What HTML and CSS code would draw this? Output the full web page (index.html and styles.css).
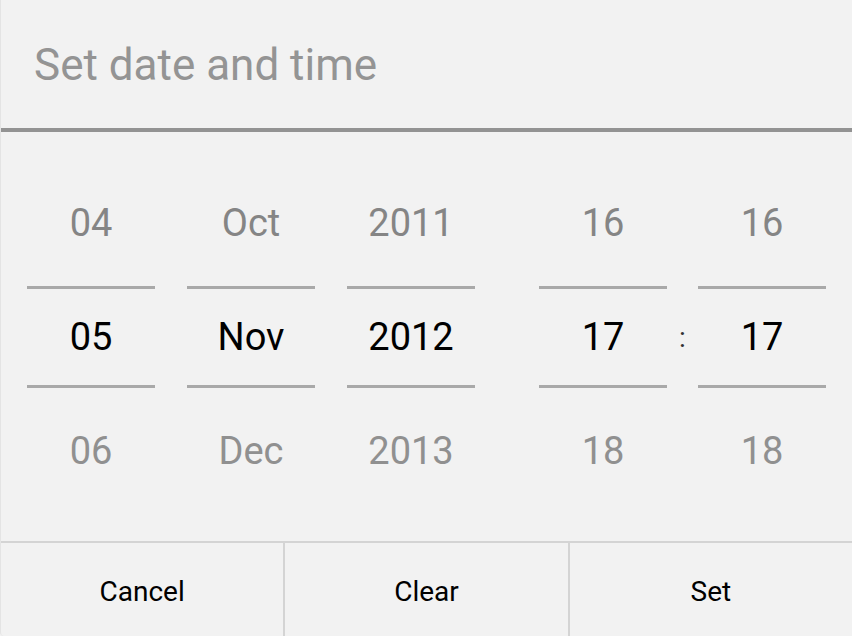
FILE: index.html
```html
<!DOCTYPE html>
<html lang="en">

<head>
    <meta charset="UTF-8">
    <meta name="viewport" content="width=device-width, initial-scale=1.0">
    <title>Set date and time</title>
    <link rel="stylesheet" href="styles.css">
</head>

<body>
    <div class="dialog">
        <div class="title">Set date and time</div>

        <div class="pickers">
            <div class="group">
                <div class="picker">
                    <div class="item prev">04</div>
                    <div class="item current">05</div>
                    <div class="item next">06</div>
                </div>
                <div class="picker">
                    <div class="item prev">Oct</div>
                    <div class="item current">Nov</div>
                    <div class="item next">Dec</div>
                </div>
                <div class="picker">
                    <div class="item prev">2011</div>
                    <div class="item current">2012</div>
                    <div class="item next">2013</div>
                </div>
            </div>

            <div class="group time">
                <div class="picker">
                    <div class="item prev">16</div>
                    <div class="item current">17</div>
                    <div class="item next">18</div>
                </div>
                <div class="colon">:</div>
                <div class="picker">
                    <div class="item prev">16</div>
                    <div class="item current">17</div>
                    <div class="item next">18</div>
                </div>
            </div>
        </div>

        <div class="buttons">
            <button>Cancel</button>
            <button>Clear</button>
            <button>Set</button>
        </div>
    </div>
</body>

</html>
```

FILE: styles.css
```css
html,
body {
    margin: 0;
    padding: 0;
    background-color: #f2f2f2;
    font-family: Roboto, "Liberation Sans", Arial, sans-serif;
}

.dialog {
    width: 852px;
    height: 636px;
    display: flex;
    flex-direction: column;
    box-sizing: border-box;
    border-left: 1px solid #e4e4e4;
    border-bottom-left-radius: 4px;
}

.title {
    height: 128px;
    flex-shrink: 0;
    padding-left: 33px;
    padding-top: 2px;
    box-sizing: border-box;
    display: flex;
    align-items: center;
    font-size: 44px;
    color: #949494;
}

/* thick divider sits on top of the picker area */
.pickers {
    flex: 1;
    display: flex;
    align-items: center;
    padding-left: 26px;
    padding-top: 1px;
    gap: 64px;
    border-top: 4px solid #939393;
}

.group {
    display: flex;
    gap: 32px;
}

.group.time {
    gap: 0;
}

.picker {
    width: 128px;
    display: flex;
    flex-direction: column;
}

.item {
    display: flex;
    align-items: center;
    justify-content: center;
    font-size: 38px;
}

.item.prev,
.item.next {
    height: 126px;
}

.item.prev {
    color: #858585;
}

.item.next {
    color: #909090;
}

.item.current {
    height: 96px;
    color: #000;
    border-top: 3px solid #a9a9a9;
    border-bottom: 3px solid #a9a9a9;
}

.colon {
    width: 31px;
    display: flex;
    align-items: center;
    justify-content: center;
    font-size: 28px;
    color: #333;
}

.buttons {
    height: 93px;
    flex-shrink: 0;
    display: flex;
    border-top: 2px solid #d4d4d4;
}

.buttons button {
    flex: 1;
    background: none;
    border: none;
    border-left: 2px solid #d4d4d4;
    font-family: inherit;
    font-size: 28px;
    color: #000;
    padding: 4px 0 0;
}

.buttons button:first-child {
    border-left: none;
}
```
